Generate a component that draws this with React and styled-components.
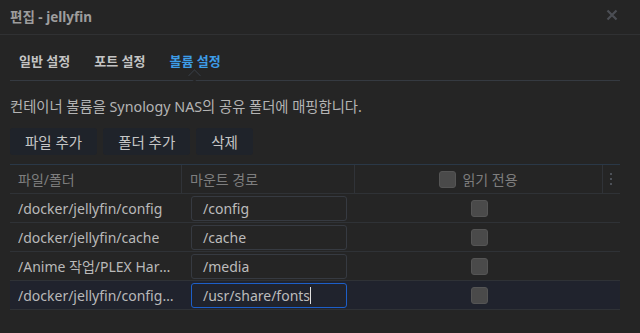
import React from 'react';
import styled, { createGlobalStyle } from 'styled-components';

const GlobalStyle = createGlobalStyle`
  html, body {
    margin: 0;
    padding: 0;
    background: #252525;
    font-family: "Noto Sans", "Noto Sans CJK KR", sans-serif;
  }
`;

const volumes = [
  { path: '/docker/jellyfin/config', mount: '/config' },
  { path: '/docker/jellyfin/cache', mount: '/cache' },
  { path: '/Anime 작업/PLEX Hard Drive', mount: '/media' },
  { path: '/docker/jellyfin/config/fonts', mount: '/usr/share/fonts', active: true },
];

export default function App() {
  return (
    <Dialog>
      <GlobalStyle />
      <TitleBar>
        <Title>편집 - jellyfin</Title>
        <Close>
          <svg width="12" height="12" viewBox="0 0 12 12">
            <path d="M1.5 1.5 L10.5 10.5 M10.5 1.5 L1.5 10.5" stroke="#4b4e54" strokeWidth="2.2" />
          </svg>
        </Close>
      </TitleBar>
      <Body>
        <Tabs>
          <Tab>일반 설정</Tab>
          <Tab>포트 설정</Tab>
          <Tab active>볼륨 설정</Tab>
        </Tabs>
        <Desc>컨테이너 볼륨을 Synology NAS의 공유 폴더에 매핑합니다.</Desc>
        <Toolbar>
          <Button>파일 추가</Button>
          <Button>폴더 추가</Button>
          <Button>삭제</Button>
        </Toolbar>
        <Table>
          <HeadRow>
            <HeadCell>파일/폴더</HeadCell>
            <HeadCell>마운트 경로</HeadCell>
            <HeadCell center>
              <Check />
              <span>읽기 전용</span>
            </HeadCell>
            <MenuCell>
              <svg width="3" height="12" viewBox="0 0 3 12">
                <rect x="0" y="0" width="2" height="2" fill="#4d5158" />
                <rect x="0" y="5" width="2" height="2" fill="#4d5158" />
                <rect x="0" y="10" width="2" height="2" fill="#4d5158" />
              </svg>
            </MenuCell>
          </HeadRow>
          {volumes.map((v) => (
            <Row key={v.path} active={v.active}>
              <PathCell>
                <PathText>{v.path}</PathText>
              </PathCell>
              <InputCell>
                <MountInput active={v.active}>
                  {v.mount}
                  {v.active && <Caret />}
                </MountInput>
              </InputCell>
              <CheckCell>
                <Check />
              </CheckCell>
              <div />
            </Row>
          ))}
        </Table>
      </Body>
    </Dialog>
  );
}

const Dialog = styled.div`
  width: 640px;
  height: 333px;
  background: #252525;
  overflow: hidden;
`;

const TitleBar = styled.div`
  height: 35px;
  box-sizing: border-box;
  border-bottom: 1px solid #303133;
  display: flex;
  align-items: center;
  justify-content: space-between;
  padding: 0 22px 0 10px;
`;

const Title = styled.div`
  font-size: 13.5px;
  font-weight: 700;
  color: #9d9d9d;
  margin-top: -3px;
`;

const Close = styled.div`
  display: flex;
  margin-top: -4px;
`;

const Body = styled.div`
  padding: 0 20px 0 10px;
`;

const Tabs = styled.div`
  display: flex;
  height: 46px;
  box-sizing: border-box;
  border-bottom: 1px solid #353a41;
  padding-top: 16px;
`;

const Tab = styled.div`
  position: relative;
  font-size: 13px;
  font-weight: 700;
  color: ${(p) => (p.active ? '#3d9de8' : '#c4c4c4')};
  padding: 0 9px;
  margin-right: 6px;

  ${(p) =>
    p.active &&
    `
    &::after {
      content: '';
      position: absolute;
      left: 50%;
      top: 20px;
      width: 8px;
      height: 8px;
      margin-left: -5px;
      background: #252525;
      border-left: 1px solid #353a41;
      border-top: 1px solid #353a41;
      transform: rotate(45deg);
    }
  `}
`;

const Desc = styled.div`
  font-size: 14.3px;
  line-height: 20px;
  color: #b4b4b4;
  margin: 16px 0 11px;
`;

const Toolbar = styled.div`
  display: flex;
  gap: 6px;
  margin-bottom: 9px;
`;

const Button = styled.div`
  height: 27px;
  box-sizing: border-box;
  background: #1f232a;
  color: #c6c6c6;
  font-size: 14.5px;
  border-radius: 3px;
  padding: 0 15px;
  display: flex;
  align-items: center;
`;

const Table = styled.div`
  border-top: 1px solid #2a3847;
`;

const cols = '172px 173px 248px 17px';

const HeadRow = styled.div`
  display: grid;
  grid-template-columns: ${cols};
  height: 29px;
  border-bottom: 1px solid #2f3236;
  box-sizing: border-box;
`;

const HeadCell = styled.div`
  display: flex;
  align-items: center;
  justify-content: ${(p) => (p.center ? 'center' : 'flex-start')};
  gap: 6px;
  padding-left: ${(p) => (p.center ? '0' : '8px')};
  font-size: 14px;
  color: #7e7e7e;
  border-right: 1px solid #303338;
`;

const MenuCell = styled.div`
  display: flex;
  align-items: center;
  justify-content: center;
`;

const Row = styled.div`
  display: grid;
  grid-template-columns: ${cols};
  height: 29px;
  box-sizing: border-box;
  border-bottom: 1px solid #2f3236;
  background: ${(p) => (p.active ? '#20232d' : 'transparent')};
`;

const PathCell = styled.div`
  display: flex;
  align-items: center;
  padding: 0 8px;
  min-width: 0;
`;

const PathText = styled.span`
  font-size: 14px;
  color: #b9b9b9;
  white-space: nowrap;
  overflow: hidden;
  text-overflow: ellipsis;
`;

const InputCell = styled.div`
  display: flex;
  align-items: center;
  padding-left: 9px;
`;

const MountInput = styled.div`
  width: 156px;
  height: 25px;
  box-sizing: border-box;
  border: 1px solid ${(p) => (p.active ? '#1d5fc9' : '#363a41')};
  border-radius: 3px;
  display: flex;
  align-items: center;
  padding-left: 11px;
  font-size: 14px;
  color: #bcbcbc;
`;

const Caret = styled.span`
  display: inline-block;
  width: 1px;
  height: 17px;
  background: #e0e0e0;
`;

const CheckCell = styled.div`
  display: flex;
  align-items: center;
  justify-content: center;
`;

const Check = styled.span`
  display: inline-block;
  width: 17px;
  height: 17px;
  box-sizing: border-box;
  border-radius: 3px;
  background: #4a4a4a;
  border: 1px solid #555;
`;
